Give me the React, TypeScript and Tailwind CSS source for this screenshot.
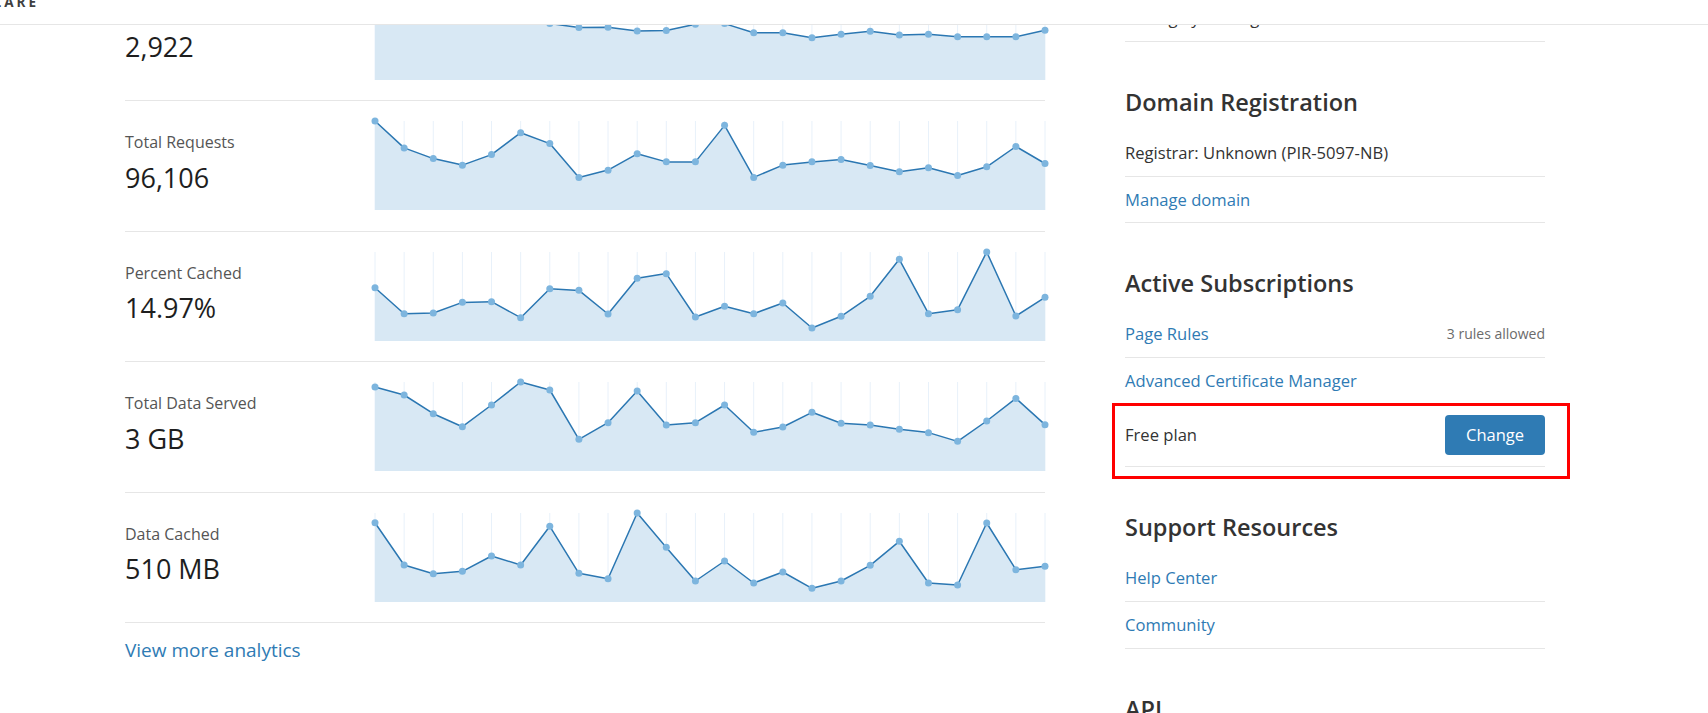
import React from "react";

const uniqueVisitors = [
  0.05, 0.2, 0.28, 0.22, 0.3, 0.33, 0.366, 0.411, 0.408, 0.449, 0.445, 0.374,
  0.366, 0.468, 0.468, 0.525, 0.487, 0.453, 0.494, 0.487, 0.513, 0.513, 0.513,
  0.442,
];
const totalRequests = [
  0, 0.302, 0.422, 0.496, 0.377, 0.131, 0.254, 0.634, 0.552, 0.369, 0.459,
  0.459, 0.049, 0.634, 0.496, 0.459, 0.433, 0.5, 0.571, 0.526, 0.612, 0.515,
  0.287, 0.478,
];
const percentCached = [
  0.401, 0.693, 0.685, 0.566, 0.558, 0.738, 0.412, 0.431, 0.697, 0.296, 0.243,
  0.73, 0.61, 0.693, 0.573, 0.854, 0.723, 0.498, 0.082, 0.693, 0.648, 0, 0.719,
  0.509,
];
const dataServed = [
  0.056, 0.146, 0.356, 0.502, 0.258, 0, 0.09, 0.644, 0.457, 0.101, 0.483,
  0.457, 0.258, 0.565, 0.506, 0.341, 0.464, 0.483, 0.532, 0.569, 0.667, 0.438,
  0.184, 0.479,
];
const dataCached = [
  0.109, 0.584, 0.682, 0.655, 0.483, 0.584, 0.15, 0.678, 0.738, 0, 0.386,
  0.764, 0.539, 0.787, 0.663, 0.846, 0.764, 0.588, 0.318, 0.787, 0.809, 0.112,
  0.637, 0.599,
];

const stats = [
  { label: "Unique Visitors", value: "2,922", data: uniqueVisitors },
  { label: "Total Requests", value: "96,106", data: totalRequests },
  { label: "Percent Cached", value: "14.97%", data: percentCached },
  { label: "Total Data Served", value: "3 GB", data: dataServed },
  { label: "Data Cached", value: "510 MB", data: dataCached },
];

function Sparkline({ data }: { data: number[] }) {
  const w = 670;
  const h = 89;
  const step = w / (data.length - 1);
  const pts = data.map((v, i) => [i * step, v * h]);
  const line = pts
    .map(([x, y], i) => `${i ? "L" : "M"}${x.toFixed(1)} ${y.toFixed(1)}`)
    .join(" ");
  const area = `${line} L${w} ${h} L0 ${h} Z`;

  return (
    <svg
      width={w}
      height={h}
      viewBox={`0 0 ${w} ${h}`}
      className="block shrink-0 overflow-visible"
    >
      {pts.map(([x], i) => (
        <line
          key={i}
          x1={x}
          x2={x}
          y1={0}
          y2={h}
          stroke="#e8f1fa"
          strokeWidth={1}
        />
      ))}
      <path d={area} fill="#d8e8f4" />
      <path
        d={line}
        fill="none"
        stroke="#2b77b2"
        strokeWidth={1.5}
        strokeLinejoin="round"
      />
      {pts.map(([x, y], i) => (
        <circle key={i} cx={x} cy={y} r={3.5} fill="#7db5de" />
      ))}
    </svg>
  );
}

function StatRow({
  label,
  value,
  data,
}: {
  label: string;
  value: string;
  data: number[];
}) {
  return (
    <div className="flex border-b border-[#e6e6e6] pt-[20px] pb-[20.5px]">
      <div className="w-[250px] pt-[9px]">
        <div className="text-[16px] leading-6 text-[#555]">{label}</div>
        <div className="mt-[5.5px] text-[27px] font-medium leading-9 text-[#1e1e1e]">
          {value}
        </div>
      </div>
      <Sparkline data={data} />
    </div>
  );
}

function Heading({ children }: { children: React.ReactNode }) {
  return (
    <h2 className="mb-[12px] text-[23.5px] font-semibold leading-8 text-[#333]">
      {children}
    </h2>
  );
}

function Item({
  children,
  link,
  aside,
}: {
  children: React.ReactNode;
  link?: boolean;
  aside?: string;
}) {
  return (
    <div className="flex items-center justify-between border-b border-[#e6e6e6] py-[10.85px] leading-6">
      <span
        className={
          link ? "text-[16.6px] text-[#2f7bb4]" : "text-[16.6px] text-[#333]"
        }
      >
        {children}
      </span>
      {aside && <span className="text-[14px] text-[#6b6b6b]">{aside}</span>}
    </div>
  );
}

export default function App() {
  return (
    <div className="relative h-[713px] overflow-hidden bg-white font-['Open_Sans',sans-serif]">
      <div className="-mt-[49px] flex pl-[125px]">
        {/* analytics column */}
        <div className="w-[920px] pt-[19.5px]">
          {stats.map((s) => (
            <StatRow key={s.label} {...s} />
          ))}
          <div className="pt-[12.5px] text-[19px] leading-7 text-[#2f7bb4]">
            View more analytics
          </div>
        </div>

        {/* sidebar */}
        <div className="ml-[80px] w-[420px] pt-[0.3px]">
          <section>
            <Heading>Cloudflare Registrar</Heading>
            <Item>Manage your Registrar</Item>
          </section>

          <section className="mt-[44px]">
            <Heading>Domain Registration</Heading>
            <Item>Registrar: Unknown (PIR-5097-NB)</Item>
            <Item link>Manage domain</Item>
          </section>

          <section className="mt-[44px]">
            <Heading>Active Subscriptions</Heading>
            <Item link aside="3 rules allowed">
              Page Rules
            </Item>
            <Item link>Advanced Certificate Manager</Item>
            <div className="relative flex items-center justify-between border-b border-[#e6e6e6] py-[10.75px]">
              <span className="text-[16.6px] leading-6 text-[#333]">
                Free plan
              </span>
              <button className="h-[40px] w-[100px] rounded-[4px] bg-[#2f7bb4] text-[16.5px] text-white">
                Change
              </button>
              <div className="pointer-events-none absolute -top-[2px] -right-[25px] -bottom-[13px] -left-[13px] border-[3px] border-[#ff0000]" />
            </div>
          </section>

          <section className="mt-[44px]">
            <Heading>Support Resources</Heading>
            <Item link>Help Center</Item>
            <Item link>Community</Item>
          </section>

          <section className="mt-[44px]">
            <Heading>API</Heading>
          </section>
        </div>
      </div>

      {/* fixed top bar */}
      <div className="absolute inset-x-0 top-0 h-[25px] overflow-hidden border-b border-[#e6e6e6] bg-white">
        <div className="-mt-[4.5px] flex w-[39px] justify-end overflow-hidden">
          <span className="whitespace-nowrap text-[13.5px] font-bold leading-[13px] tracking-[3px] text-[#404040]">
            CLOUDFLARE
          </span>
        </div>
      </div>
    </div>
  );
}
